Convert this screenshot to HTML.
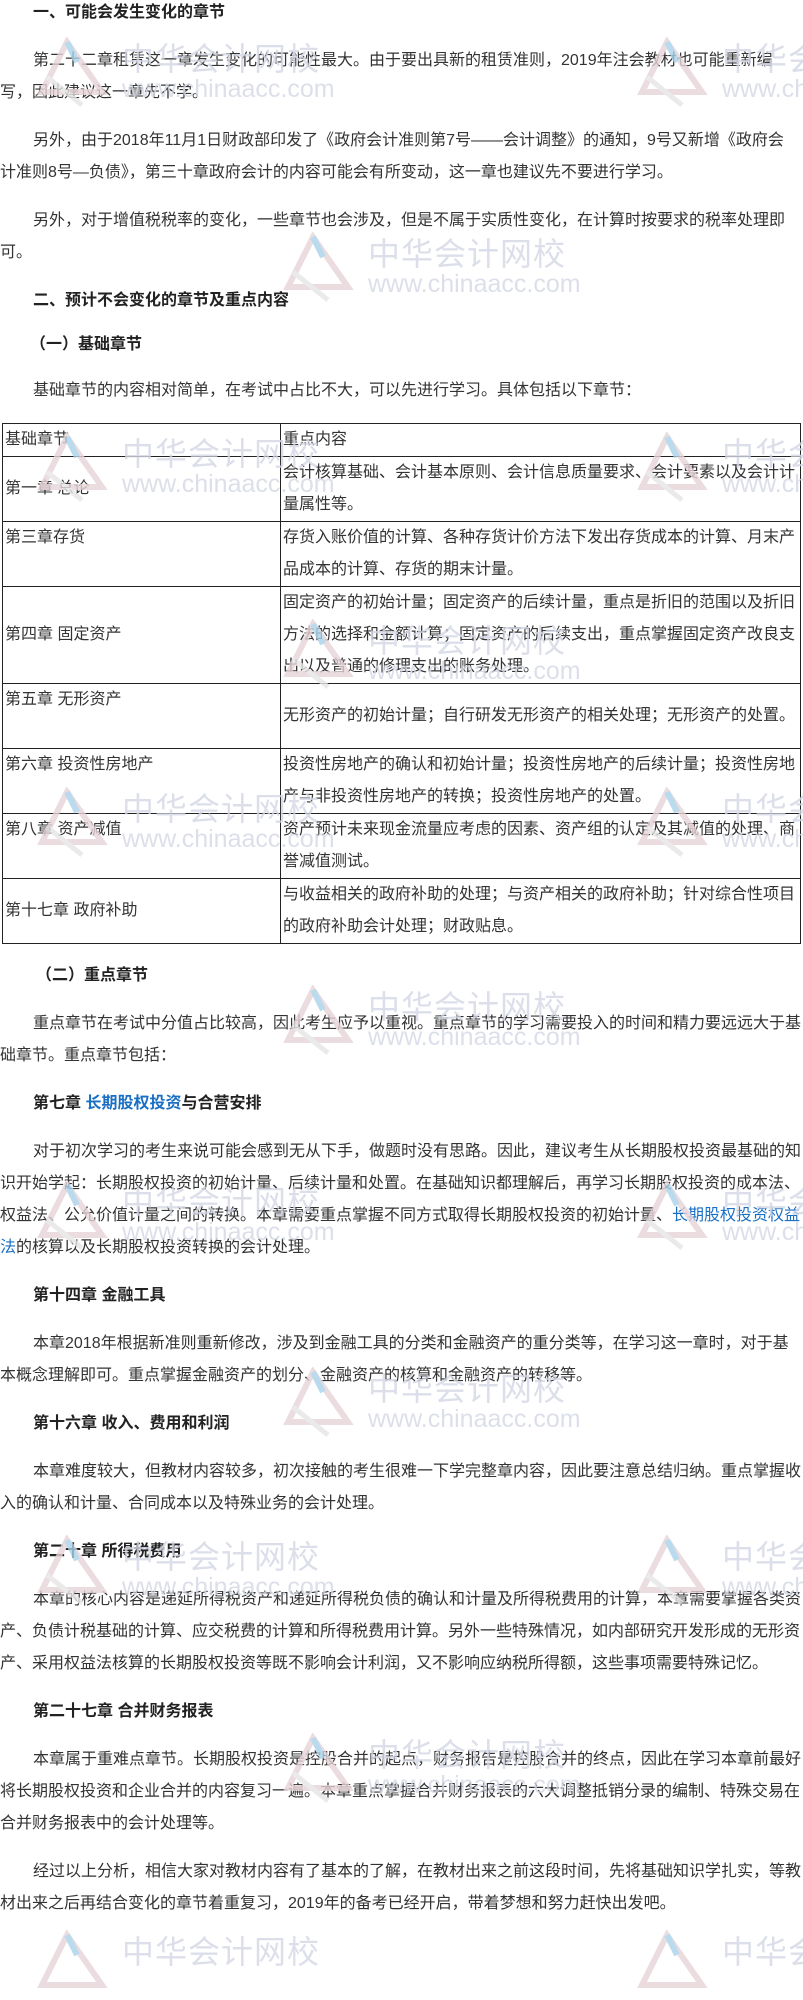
<!DOCTYPE html>
<html><head><meta charset="utf-8">
<style>
html,body{margin:0;padding:0;background:#fff;}
body{width:803px;height:1953px;overflow:hidden;position:relative;font-family:"Liberation Sans","Noto Sans CJK SC",sans-serif;font-size:16px;color:#333;}
#c{position:absolute;left:0;top:-3px;width:803px;}
p{margin:0 0 16px 0;line-height:32px;white-space:nowrap;}
.i{text-indent:33px;}
.b{font-weight:bold;color:#222;}
a{color:#1a6fc4;text-decoration:none;}
table{border-collapse:collapse;margin:0 0 16px 2px;width:799px;table-layout:fixed;}
td{border:1.5px solid #222;padding:0 0 0 2px;line-height:32px;white-space:nowrap;overflow:hidden;vertical-align:top;}
td.m{vertical-align:middle;}
.wm{position:absolute;color:#d4d8e5;opacity:.8;pointer-events:none;z-index:2;white-space:nowrap;}
.wm .t{font-size:32px;line-height:34px;letter-spacing:1px;}
.wm .u{font-size:25px;line-height:26px;font-family:"Liberation Sans Narrow","Liberation Sans",sans-serif;}
.wm svg{position:absolute;left:-95px;top:-5px;}
</style></head><body>
<div id="c">
<p class="b" style="padding-left:33px">一、可能会发生变化的章节</p>
<p class="i">第二十二章租赁这一章发生变化的可能性最大。由于要出具新的租赁准则，2019年注会教材也可能重新编<br>写，因此建议这一章先不学。</p>
<p class="i">另外，由于2018年11月1日财政部印发了《政府会计准则第7号——会计调整》的通知，9号又新增《政府会<br>计准则8号—负债》，第三十章政府会计的内容可能会有所变动，这一章也建议先不要进行学习。</p>
<p class="i">另外，对于增值税税率的变化，一些章节也会涉及，但是不属于实质性变化，在计算时按要求的税率处理即<br>可。</p>
<p class="b" style="padding-left:33px;margin-bottom:12px">二、预计不会变化的章节及重点内容</p>
<p class="b" style="padding-left:30px;margin-bottom:14px">（一）基础章节</p>
<p class="i">基础章节的内容相对简单，在考试中占比不大，可以先进行学习。具体包括以下章节：</p>
<table>
<col style="width:278px"><col>
<tr><td>基础章节</td><td>重点内容</td></tr>
<tr><td class="m">第一章 总论</td><td>会计核算基础、会计基本原则、会计信息质量要求、会计要素以及会计计<br>量属性等。</td></tr>
<tr><td>第三章存货</td><td>存货入账价值的计算、各种存货计价方法下发出存货成本的计算、月末产<br>品成本的计算、存货的期末计量。</td></tr>
<tr><td class="m">第四章 固定资产</td><td>固定资产的初始计量；固定资产的后续计量，重点是折旧的范围以及折旧<br>方法的选择和金额计算；固定资产的后续支出，重点掌握固定资产改良支<br>出以及普通的修理支出的账务处理。</td></tr>
<tr><td>第五章 无形资产<br>&nbsp;</td><td class="m">无形资产的初始计量；自行研发无形资产的相关处理；无形资产的处置。</td></tr>
<tr><td>第六章 投资性房地产<br>&nbsp;</td><td>投资性房地产的确认和初始计量；投资性房地产的后续计量；投资性房地<br>产与非投资性房地产的转换；投资性房地产的处置。</td></tr>
<tr><td>第八章 资产减值<br>&nbsp;</td><td>资产预计未来现金流量应考虑的因素、资产组的认定及其减值的处理、商<br>誉减值测试。</td></tr>
<tr><td class="m">第十七章 政府补助</td><td>与收益相关的政府补助的处理；与资产相关的政府补助；针对综合性项目<br>的政府补助会计处理；财政贴息。</td></tr>
</table>
<p class="b" style="padding-left:36px">（二）重点章节</p>
<p class="i">重点章节在考试中分值占比较高，因此考生应予以重视。重点章节的学习需要投入的时间和精力要远远大于基<br>础章节。重点章节包括：</p>
<p class="b" style="padding-left:33px">第七章 <a>长期股权投资</a>与合营安排</p>
<p class="i">对于初次学习的考生来说可能会感到无从下手，做题时没有思路。因此，建议考生从长期股权投资最基础的知<br>识开始学起：长期股权投资的初始计量、后续计量和处置。在基础知识都理解后，再学习长期股权投资的成本法、<br>权益法、公允价值计量之间的转换。本章需要重点掌握不同方式取得长期股权投资的初始计量、<a>长期股权投资权益</a><br><a>法</a>的核算以及长期股权投资转换的会计处理。</p>
<p class="b" style="padding-left:33px">第十四章 金融工具</p>
<p class="i">本章2018年根据新准则重新修改，涉及到金融工具的分类和金融资产的重分类等，在学习这一章时，对于基<br>本概念理解即可。重点掌握金融资产的划分、金融资产的核算和金融资产的转移等。</p>
<p class="b" style="padding-left:33px">第十六章 收入、费用和利润</p>
<p class="i">本章难度较大，但教材内容较多，初次接触的考生很难一下学完整章内容，因此要注意总结归纳。重点掌握收<br>入的确认和计量、合同成本以及特殊业务的会计处理。</p>
<p class="b" style="padding-left:33px">第二十章 所得税费用</p>
<p class="i">本章的核心内容是递延所得税资产和递延所得税负债的确认和计量及所得税费用的计算，本章需要掌握各类资<br>产、负债计税基础的计算、应交税费的计算和所得税费用计算。另外一些特殊情况，如内部研究开发形成的无形资<br>产、采用权益法核算的长期股权投资等既不影响会计利润，又不影响应纳税所得额，这些事项需要特殊记忆。</p>
<p class="b" style="padding-left:33px">第二十七章 合并财务报表</p>
<p class="i">本章属于重难点章节。长期股权投资是控股合并的起点，财务报告是控股合并的终点，因此在学习本章前最好<br>将长期股权投资和企业合并的内容复习一遍。本章重点掌握合并财务报表的六大调整抵销分录的编制、特殊交易在<br>合并财务报表中的会计处理等。</p>
<p class="i">经过以上分析，相信大家对教材内容有了基本的了解，在教材出来之前这段时间，先将基础知识学扎实，等教<br>材出来之后再结合变化的章节着重复习，2019年的备考已经开启，带着梦想和努力赶快出发吧。</p>
</div>

<div class="wm" style="left:122px;top:42px"><svg width="90" height="70"><path d="M40 5 L15 55 L75 55 Z" fill="none" stroke="#e7d4d8" stroke-width="6"/><path d="M40 5 L50 25" stroke="#a9d3ea" stroke-width="6"/><path d="M20 40 L55 68" stroke="#e6e6e6" stroke-width="5"/></svg><div class="t">中华会计网校</div><div class="u">www.chinaacc.com</div></div>
<div class="wm" style="left:722px;top:42px"><svg width="90" height="70"><path d="M40 5 L15 55 L75 55 Z" fill="none" stroke="#e7d4d8" stroke-width="6"/><path d="M40 5 L50 25" stroke="#a9d3ea" stroke-width="6"/><path d="M20 40 L55 68" stroke="#e6e6e6" stroke-width="5"/></svg><div class="t">中华会计网校</div><div class="u">www.chinaacc.com</div></div>
<div class="wm" style="left:368px;top:237px"><svg width="90" height="70"><path d="M40 5 L15 55 L75 55 Z" fill="none" stroke="#e7d4d8" stroke-width="6"/><path d="M40 5 L50 25" stroke="#a9d3ea" stroke-width="6"/><path d="M20 40 L55 68" stroke="#e6e6e6" stroke-width="5"/></svg><div class="t">中华会计网校</div><div class="u">www.chinaacc.com</div></div>
<div class="wm" style="left:122px;top:437px"><svg width="90" height="70"><path d="M40 5 L15 55 L75 55 Z" fill="none" stroke="#e7d4d8" stroke-width="6"/><path d="M40 5 L50 25" stroke="#a9d3ea" stroke-width="6"/><path d="M20 40 L55 68" stroke="#e6e6e6" stroke-width="5"/></svg><div class="t">中华会计网校</div><div class="u">www.chinaacc.com</div></div>
<div class="wm" style="left:722px;top:437px"><svg width="90" height="70"><path d="M40 5 L15 55 L75 55 Z" fill="none" stroke="#e7d4d8" stroke-width="6"/><path d="M40 5 L50 25" stroke="#a9d3ea" stroke-width="6"/><path d="M20 40 L55 68" stroke="#e6e6e6" stroke-width="5"/></svg><div class="t">中华会计网校</div><div class="u">www.chinaacc.com</div></div>
<div class="wm" style="left:368px;top:624px"><svg width="90" height="70"><path d="M40 5 L15 55 L75 55 Z" fill="none" stroke="#e7d4d8" stroke-width="6"/><path d="M40 5 L50 25" stroke="#a9d3ea" stroke-width="6"/><path d="M20 40 L55 68" stroke="#e6e6e6" stroke-width="5"/></svg><div class="t">中华会计网校</div><div class="u">www.chinaacc.com</div></div>
<div class="wm" style="left:122px;top:792px"><svg width="90" height="70"><path d="M40 5 L15 55 L75 55 Z" fill="none" stroke="#e7d4d8" stroke-width="6"/><path d="M40 5 L50 25" stroke="#a9d3ea" stroke-width="6"/><path d="M20 40 L55 68" stroke="#e6e6e6" stroke-width="5"/></svg><div class="t">中华会计网校</div><div class="u">www.chinaacc.com</div></div>
<div class="wm" style="left:722px;top:792px"><svg width="90" height="70"><path d="M40 5 L15 55 L75 55 Z" fill="none" stroke="#e7d4d8" stroke-width="6"/><path d="M40 5 L50 25" stroke="#a9d3ea" stroke-width="6"/><path d="M20 40 L55 68" stroke="#e6e6e6" stroke-width="5"/></svg><div class="t">中华会计网校</div><div class="u">www.chinaacc.com</div></div>
<div class="wm" style="left:368px;top:990px"><svg width="90" height="70"><path d="M40 5 L15 55 L75 55 Z" fill="none" stroke="#e7d4d8" stroke-width="6"/><path d="M40 5 L50 25" stroke="#a9d3ea" stroke-width="6"/><path d="M20 40 L55 68" stroke="#e6e6e6" stroke-width="5"/></svg><div class="t">中华会计网校</div><div class="u">www.chinaacc.com</div></div>
<div class="wm" style="left:122px;top:1185px"><svg width="90" height="70"><path d="M40 5 L15 55 L75 55 Z" fill="none" stroke="#e7d4d8" stroke-width="6"/><path d="M40 5 L50 25" stroke="#a9d3ea" stroke-width="6"/><path d="M20 40 L55 68" stroke="#e6e6e6" stroke-width="5"/></svg><div class="t">中华会计网校</div><div class="u">www.chinaacc.com</div></div>
<div class="wm" style="left:722px;top:1185px"><svg width="90" height="70"><path d="M40 5 L15 55 L75 55 Z" fill="none" stroke="#e7d4d8" stroke-width="6"/><path d="M40 5 L50 25" stroke="#a9d3ea" stroke-width="6"/><path d="M20 40 L55 68" stroke="#e6e6e6" stroke-width="5"/></svg><div class="t">中华会计网校</div><div class="u">www.chinaacc.com</div></div>
<div class="wm" style="left:368px;top:1372px"><svg width="90" height="70"><path d="M40 5 L15 55 L75 55 Z" fill="none" stroke="#e7d4d8" stroke-width="6"/><path d="M40 5 L50 25" stroke="#a9d3ea" stroke-width="6"/><path d="M20 40 L55 68" stroke="#e6e6e6" stroke-width="5"/></svg><div class="t">中华会计网校</div><div class="u">www.chinaacc.com</div></div>
<div class="wm" style="left:122px;top:1540px"><svg width="90" height="70"><path d="M40 5 L15 55 L75 55 Z" fill="none" stroke="#e7d4d8" stroke-width="6"/><path d="M40 5 L50 25" stroke="#a9d3ea" stroke-width="6"/><path d="M20 40 L55 68" stroke="#e6e6e6" stroke-width="5"/></svg><div class="t">中华会计网校</div><div class="u">www.chinaacc.com</div></div>
<div class="wm" style="left:722px;top:1540px"><svg width="90" height="70"><path d="M40 5 L15 55 L75 55 Z" fill="none" stroke="#e7d4d8" stroke-width="6"/><path d="M40 5 L50 25" stroke="#a9d3ea" stroke-width="6"/><path d="M20 40 L55 68" stroke="#e6e6e6" stroke-width="5"/></svg><div class="t">中华会计网校</div><div class="u">www.chinaacc.com</div></div>
<div class="wm" style="left:368px;top:1738px"><svg width="90" height="70"><path d="M40 5 L15 55 L75 55 Z" fill="none" stroke="#e7d4d8" stroke-width="6"/><path d="M40 5 L50 25" stroke="#a9d3ea" stroke-width="6"/><path d="M20 40 L55 68" stroke="#e6e6e6" stroke-width="5"/></svg><div class="t">中华会计网校</div><div class="u">www.chinaacc.com</div></div>
<div class="wm" style="left:122px;top:1935px"><svg width="90" height="70"><path d="M40 5 L15 55 L75 55 Z" fill="none" stroke="#e7d4d8" stroke-width="6"/><path d="M40 5 L50 25" stroke="#a9d3ea" stroke-width="6"/></svg><div class="t">中华会计网校</div></div>
<div class="wm" style="left:722px;top:1935px"><svg width="90" height="70"><path d="M40 5 L15 55 L75 55 Z" fill="none" stroke="#e7d4d8" stroke-width="6"/><path d="M40 5 L50 25" stroke="#a9d3ea" stroke-width="6"/></svg><div class="t">中华会计网校</div></div>
</body></html>
